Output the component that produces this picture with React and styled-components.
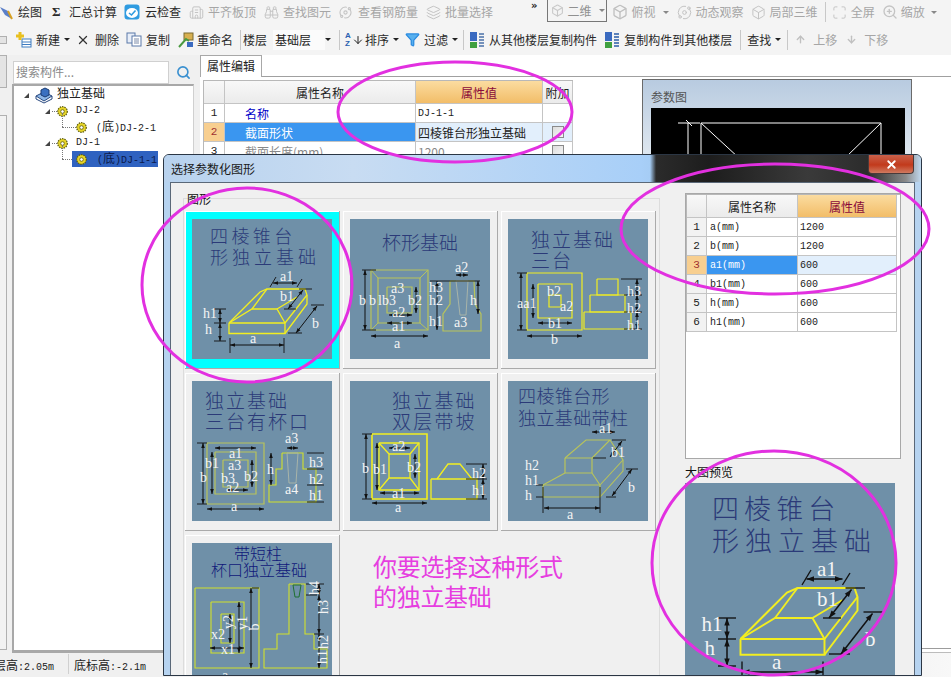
import React from "react";
import styled, { createGlobalStyle } from "styled-components";
import { Search, X, Filter, Binoculars, ArrowUp, ArrowDown, Maximize, ZoomIn, Box, Layers, Orbit, Building2 } from "lucide-react";

const GlobalStyle = createGlobalStyle`
  html, body { margin: 0; padding: 0; background: #fff; }
  body { font-family: "Noto Sans CJK SC", "Liberation Sans", sans-serif; font-size: 12px; color: #222; }
`;

const Page = styled.div`
  position: relative;
  width: 951px;
  height: 677px;
  overflow: hidden;
  background: #f0f0f0;
  display: flex;
  flex-direction: column;
`;

const Toolbar = styled.div`
  height: ${(p) => p.$h}px;
  flex: none;
  display: flex;
  align-items: center;
  background: #f4f4f4;
  white-space: nowrap;
  overflow: hidden;
`;

const Tool = styled.div`
  display: flex;
  align-items: center;
  flex: none;
  gap: ${(p) => p.$gap ?? 4}px;
  margin-left: ${(p) => p.$ml ?? 0}px;
  color: ${(p) => (p.$off ? "#a6a6a6" : "#2a2a2a")};
  height: 18px;
  line-height: 18px;
`;

const DropArrow = styled.span`
  width: 0;
  height: 0;
  flex: none;
  margin-left: ${(p) => p.$ml ?? 3}px;
  border-left: 3px solid transparent;
  border-right: 3px solid transparent;
  border-top: 3px solid ${(p) => (p.$off ? "#888" : "#222")};
`;

const Sep = styled.span`
  width: 1px;
  height: 20px;
  flex: none;
  background: #c8c8c8;
  margin-left: ${(p) => p.$ml}px;
`;

const ViewCombo = styled.div`
  flex: none;
  margin-left: ${(p) => p.$ml}px;
  width: 60px;
  height: 22px;
  box-sizing: border-box;
  border: 1px solid #777;
  border-top: 0;
  display: flex;
  align-items: center;
  gap: 4px;
  padding-left: 3px;
  color: #909090;
  align-self: flex-start;
`;

const FloorCombo = styled.div`
  flex: none;
  width: 50px;
  margin-left: 6px;
  padding-left: 2px;
  background: #fbfbfb;
  height: 20px;
  line-height: 20px;
`;

const Overflow = styled.span`
  flex: none;
  margin-left: 38px;
  align-self: flex-start;
  font: bold 10px/9px "DejaVu Sans", sans-serif;
  padding-top: 1px;
`;

const SigmaGlyph = styled.span`
  font: bold 13px "Liberation Serif", serif;
  width: 10px;
`;

const SortGlyph = styled.span`
  display: flex;
  flex-direction: column;
  width: 6px;
  font: bold 8px/8px "Liberation Sans", sans-serif;
  color: #2a60b0;
`;

const Workspace = styled.div`
  flex: 1;
  display: flex;
  min-height: 0;
`;

const LeftStrip = styled.div`
  width: 12px;
  flex: none;
  display: flex;
  flex-direction: column;
  gap: 27px;
`;

const StripTab = styled.div`
  flex: none;
  width: 7px;
  height: ${(p) => p.$h}px;
  background: ${(p) => p.$bg || "#e4e4e4"};
  border: 1px solid #b0b0b0;
  border-left: 0;
  box-sizing: border-box;
`;

const LeftPane = styled.div`
  width: 182px;
  flex: none;
  display: flex;
  flex-direction: column;
  padding-top: 5px;
`;

const SearchRow = styled.div`
  height: 24px;
  display: flex;
  align-items: center;
  flex: none;
`;

const SearchInput = styled.div`
  width: 156px;
  height: 23px;
  margin-left: 1px;
  background: #fff;
  border: 1px solid #d0d0d0;
  box-sizing: border-box;
  color: #8a8a8a;
  line-height: 19px;
  padding-left: 2px;
`;

const SearchIconWrap = styled.span`
  margin-left: 7px;
  display: flex;
  color: #3a90d0;
`;

const TreeBox = styled.div`
  flex: 1;
  background: #fff;
  border: 1px solid #a8a8a8;
  border-width: 2px 0 3px 2px;
  border-right: 1px solid #d0d0d0;
  padding-top: 1px;
`;

const TreeRow = styled.div`
  position: relative;
  height: 16px;
  display: flex;
  align-items: center;
  padding-left: ${(p) => p.$indent}px;
`;

const Expander = styled.span`
  width: 0;
  height: 0;
  flex: none;
  margin-right: ${(p) => p.$mr ?? 2}px;
  border-left: 5px solid transparent;
  border-bottom: 5px solid #444;
`;

const TreeDots = styled.span`
  flex: none;
  width: ${(p) => p.$w}px;
  border-top: 1px dotted #777;
`;

const TreeGuide = styled.span`
  position: absolute;
  left: ${(p) => p.$x}px;
  top: -6px;
  height: 14px;
  border-left: 1px dotted #777;
`;

const TreeLabel = styled.span`
  margin-left: ${(p) => p.$ml ?? 6}px;
  color: #222;
  font: ${(p) => (p.$cjk ? 12 : 10)}px/16px "Liberation Mono", "Noto Sans CJK SC", monospace;
`;

const SelectedNode = styled.span`
  display: flex;
  align-items: center;
  gap: 10px;
  width: 86px;
  height: 16px;
  padding-left: 4px;
  box-sizing: border-box;
  background: #2f62c0;
  color: #0c1a4a;
  font: 10px/16px "Liberation Mono", "Noto Sans CJK SC", monospace;
`;

const Cjk = styled.span`
  font: 12px "Noto Sans CJK SC", sans-serif;
`;

const Mono = styled.span`
  font: 10px "Liberation Mono", monospace;
`;

const MainPane = styled.div`
  flex: 1;
  margin-left: 6px;
  background: #fff;
  display: flex;
  flex-direction: column;
  min-width: 0;
`;

const TabStrip = styled.div`
  height: 22px;
  flex: none;
  box-sizing: border-box;
  border-bottom: 1px solid #a0a0a0;
`;

const Tab = styled.div`
  width: 62px;
  height: 22px;
  box-sizing: border-box;
  border: 1px solid #a8a8a8;
  border-bottom: 0;
  background: #fff;
  text-align: center;
  line-height: 20px;
`;

const MainBody = styled.div`
  display: flex;
  align-items: flex-start;
`;

const PropTable = styled.div`
  display: grid;
  grid-template-columns: ${(p) => p.$cols};
  grid-template-rows: ${(p) => p.$head}px;
  grid-auto-rows: 19px;
  margin: ${(p) => p.$margin};
  border-top: 1px solid #b8b8b8;
  border-left: 1px solid #b8b8b8;
  flex: none;
`;

const Cell = styled.div`
  box-sizing: border-box;
  border-right: 1px solid #c4c4c4;
  border-bottom: 1px solid #c4c4c4;
  background: ${(p) => p.$bg || "#fff"};
  color: ${(p) => p.$color || "#222"};
  padding-left: ${(p) => p.$pl ?? 2}px;
  display: flex;
  align-items: center;
  justify-content: ${(p) => (p.$center ? "center" : "flex-start")};
  overflow: hidden;
  white-space: nowrap;
`;

const IndexCell = styled(Cell)`
  font: 11px "Liberation Mono", monospace;
  padding-left: 0;
  justify-content: center;
`;

const HeadCell = styled(Cell)`
  background: linear-gradient(#f8f8f8, #ebebeb);
  justify-content: center;
  padding-left: 0;
`;

const ValueHead = styled(HeadCell)`
  background: linear-gradient(#fbdca0, #f2bd68);
  color: #8a0a3a;
`;

const CheckBox = styled.span`
  width: 12px;
  height: 12px;
  box-sizing: border-box;
  border: 1px solid #8a8a8a;
  background: linear-gradient(135deg, #ddd, #f6f6f6);
`;

const ParamPanel = styled.div`
  flex: none;
  width: 270px;
  height: 90px;
  margin: 2px 0 0 69px;
  box-sizing: border-box;
  border: 1px solid #6a6a6a;
  background: linear-gradient(#b8cbe0, #e6ecf2);
  padding: 0 7px 0 8px;
  color: #555;
`;

const ParamTitle = styled.div`
  height: 28px;
  line-height: 34px;
`;

const BlackView = styled.svg`
  display: block;
  width: 254px;
  height: 60px;
  background: #000;
`;

const PaneFooter = styled.div`
  margin-top: auto;
  height: 3px;
  border-top: 1px solid #9c9c9c;
  border-bottom: 1px solid #bcbcbc;
`;

const StatusBar = styled.div`
  height: 24px;
  flex: none;
  box-sizing: border-box;
  padding-bottom: 2px;
  display: flex;
  align-items: center;
  background: linear-gradient(90deg, #f0f0f0, #f0f0f0 90%, #f8f8f8);
`;

const StatusText = styled.span`
  flex: none;
  width: ${(p) => p.$w}px;
  margin-left: ${(p) => p.$ml}px;
`;

const StatusSep = styled.span`
  width: 1px;
  height: 20px;
  background: #d0d0d0;
`;

const Dialog = styled.div`
  position: absolute;
  left: 163px;
  top: 154px;
  width: 759px;
  height: 522px;
  box-sizing: border-box;
  border: 1px solid #2b3644;
  border-radius: 6px 6px 0 0;
  background: #b6d3f0;
  display: flex;
  flex-direction: column;
  overflow: hidden;
`;

const TitleBar = styled.div`
  position: relative;
  height: 27px;
  flex: none;
  padding-left: 7px;
  line-height: 28px;
  color: #1a1a1a;
  background: linear-gradient(90deg, #b8d2ee 0%, #c8dcf2 25%, #a8cff8 63%, #a6cdf5 64.2%, #2b2b2b 65%, #1d1d1d 72%, #3a3a3a 85%, #2c2c2c 93%, #8a8a8a 98%, #c0d8ee 100%);
`;

const CloseButton = styled.div`
  position: absolute;
  right: 7px;
  top: 0;
  width: 46px;
  height: 19px;
  box-sizing: border-box;
  border: 1px solid #4a3a3a;
  border-top: 0;
  border-radius: 0 0 4px 4px;
  background: linear-gradient(#c9604a, #c23a1c 55%, #d07a60);
  color: #fff;
  display: flex;
  align-items: center;
  justify-content: center;
`;

const DialogBody = styled.div`
  flex: 1;
  min-height: 0;
  margin: 0 6px;
  box-sizing: border-box;
  border: 1px solid #5a6878;
  border-bottom: 0;
  background: #f0f0f0;
  display: flex;
  overflow: hidden;
`;

const ShapeGroup = styled.div`
  flex: none;
  width: 477px;
  margin: 15px 0 0 12px;
  padding-left: 1px;
  box-sizing: border-box;
  border-top: 1px solid #dcdcdc;
  border-right: 1px solid #dcdcdc;
  border-left: 1px solid #dcdcdc;
`;

const GroupLabel = styled.div`
  height: 14px;
  line-height: 14px;
  margin: ${(p) => p.$margin};
  color: #111;
`;

const ShapeGrid = styled.div`
  display: grid;
  grid-template-columns: repeat(3, 155px);
  grid-auto-rows: 158px;
  gap: 4px 3px;
  margin-top: 5px;
`;

const ShapeCard = styled.div`
  box-sizing: border-box;
  padding: 8px 7px 0;
  background: ${(p) => (p.$selected ? "#00ffff" : "#f0f0f0")};
  border-right: 1px solid #aaa;
  border-bottom: 1px solid #aaa;
  box-shadow: inset 1px 1px 0 #fff;
`;

const Note = styled.div`
  grid-column: 2 / 4;
  padding: 16px 0 0 30px;
  font-size: 24px;
  line-height: 30px;
  letter-spacing: -0.3px;
  color: #e63ee0;
`;

const SidePanel = styled.div`
  flex: none;
  width: 235px;
  margin-left: 18px;
`;

const PropBox = styled.div`
  width: 216px;
  height: 266px;
  margin: 10px 0 0 7px;
  box-sizing: border-box;
  background: #fff;
  border: 1px solid #a8a8a8;
  overflow: hidden;
`;

const PreviewGroup = styled.div`
  margin-top: 6px;
`;

const FigSvg = styled.svg`
  display: block;
  width: ${(p) => p.$size}px;
  height: ${(p) => p.$size}px;
  background: #6f90a8;
  margin-left: ${(p) => p.$ml ?? 0}px;
  margin-top: ${(p) => p.$mt ?? 0}px;
`;

const FigTitle = styled.text`
  font-family: "Noto Sans CJK SC", sans-serif;
  font-size: ${(p) => p.$size}px;
  letter-spacing: ${(p) => p.$spacing}px;
  fill: ${(p) => p.$color};
  font-weight: 300;
`;

const FigLabel = styled.text`
  font-family: "Liberation Serif", serif;
  font-size: 14px;
  fill: #f4f4f4;
  dominant-baseline: central;
`;

const Ellipses = styled.svg`
  position: absolute;
  left: 0;
  top: 0;
  pointer-events: none;
`;

const YELLOW = "#f2ee20";
const OLIVE = "#b9c45a";
const LIME = "#d2e02a";

const rect = (x1, y1, x2, y2) => `${x1},${y1} ${x2},${y1} ${x2},${y2} ${x1},${y2} ${x1},${y1}`;

const frustum = {
  titles: [
    { t: "四棱锥台", x: 18, y: 24, size: 18, spacing: 3.4 },
    { t: "形独立基础", x: 18, y: 45, size: 18, spacing: 4 },
  ],
  shapes: [
    [rect(37, 104, 93, 114.5), YELLOW, 1.3],
    ["37,104 60,90 85,90 93,104", YELLOW, 1.3],
    ["37,104 68,73 75,70 113,70 115,76 115,85 93,114.5", YELLOW, 1.3],
    ["60,90 75,70", YELLOW, 1.3],
    ["85,90 105,78", YELLOW, 1.3],
    ["93,104 115,76", YELLOW, 1.3],
  ],
  ticks: [
    [38, 119, 38, 134], [92, 119, 92, 134], [78, 68, 84, 58], [105, 68, 110, 60],
    [107, 70, 120, 70], [92, 90, 104, 90], [96, 114, 110, 114], [119, 86, 132, 86],
    [22, 90, 34, 90], [22, 104, 34, 104], [22, 122, 34, 122],
  ],
  dims: [[38, 126, 92, 126], [81, 64, 105, 64], [96, 90, 111, 71], [104, 114, 125, 87], [28, 90, 28, 104], [28, 104, 28, 122]],
  labels: [["a", 58, 119], ["a1", 88, 57], ["b1", 88, 77], ["b", 120, 104], ["h1", 11, 94], ["h", 13, 110]],
};

const cup = {
  titles: [{ t: "杯形基础", x: 32, y: 31, size: 19, spacing: 0 }],
  shapes: [
    [rect(21, 51, 78, 111), OLIVE, 1.2], [rect(28, 59, 70, 104), OLIVE, 1.2], [rect(37, 68, 62, 94), OLIVE, 1.2],
    ["21,51 28,59", OLIVE, 1], ["78,51 70,59", OLIVE, 1], ["21,111 28,104", OLIVE, 1], ["78,111 70,104", OLIVE, 1],
    ["100,62 124,62 125,85 131,95 131,112 93,112 93,95 100,85 100,62", OLIVE, 1.2],
    ["106,62 118,62 116,96 110,96 106,62", "#a8b4a8", 1],
  ],
  ticks: [[12, 51, 26, 51], [12, 111, 26, 111], [80, 62, 130, 62]],
  dims: [[15, 51, 15, 111], [21, 117, 78, 117], [37, 104, 62, 104], [39, 96, 62, 96], [106, 56, 118, 56], [66, 68, 66, 94], [128, 62, 128, 95], [87, 62, 87, 111]],
  labels: [["a", 44, 124], ["a1", 42, 107], ["a2", 42, 93], ["a3", 41, 69], ["b", 9, 81], ["b", 19, 81], ["lb3", 28, 81], ["b2", 58, 81], ["a2", 105, 48], ["h3", 79, 68], ["h2", 79, 81], ["h1", 79, 102], ["h", 120, 81], ["a3", 104, 103]],
};

const threeStep = {
  titles: [
    { t: "独立基础", x: 23, y: 28, size: 19, spacing: 2 },
    { t: "三台", x: 23, y: 49, size: 19, spacing: 2 },
  ],
  shapes: [
    [rect(19, 54, 74, 111), YELLOW, 1.2], [rect(30, 65, 64, 99), YELLOW, 1.2], [rect(41, 76, 53, 88), YELLOW, 1.2],
    [rect(76, 93, 123, 110), YELLOW, 1.2], [rect(82, 76, 117, 93), YELLOW, 1.2], [rect(89, 60, 110, 76), YELLOW, 1.2],
  ],
  ticks: [[9, 54, 19, 54], [9, 111, 19, 111], [113, 60, 134, 60], [116, 76, 134, 76], [116, 93, 134, 93], [116, 110, 134, 110]],
  dims: [[13, 54, 13, 111], [25, 65, 25, 99], [30, 104, 64, 104], [19, 117, 74, 117], [129, 60, 129, 76], [129, 76, 129, 93], [129, 93, 129, 110]],
  labels: [["aa1", 9, 84], ["b2", 39, 72], ["a2", 52, 87], ["b1", 40, 104], ["b", 43, 120], ["h3", 119, 72], ["h2", 119, 89], ["h1", 119, 106]],
};

const threeCup = {
  titles: [
    { t: "独立基础", x: 13, y: 27, size: 19, spacing: 2 },
    { t: "三台有杯口", x: 13, y: 48, size: 19, spacing: 2 },
  ],
  shapes: [
    [rect(15, 62, 72, 123), OLIVE, 1.2], [rect(23, 71, 64, 113), OLIVE, 1.2], [rect(31, 79, 56, 106), OLIVE, 1.2],
    ["90,72 111,72 111,88 124,88 124,121 77,121 77,104 84,104 84,88 90,88 90,72", LIME, 1.1],
    ["95,72 106,72 104,102 97,102 95,72", "#a8b4a8", 1],
  ],
  ticks: [[5, 62, 15, 62], [5, 123, 15, 123], [115, 72, 132, 72], [115, 88, 132, 88], [115, 104, 132, 104], [115, 121, 132, 121]],
  dims: [[11, 62, 11, 123], [15, 128, 72, 128], [23, 67, 64, 67], [20, 71, 20, 113], [35, 109, 56, 109], [60, 79, 60, 106], [95, 67, 106, 67], [79, 72, 79, 104]],
  labels: [["a", 39, 125], ["a1", 37, 72], ["b1", 13, 82], ["a3", 36, 84], ["b", 8, 96], ["b3", 29, 97], ["b2", 52, 95], ["a2", 34, 106], ["a3", 93, 57], ["h", 75, 88], ["a4", 93, 108], ["h3", 117, 81], ["h2", 117, 98], ["h1", 117, 114]],
};

const doubleSlope = {
  titles: [
    { t: "独立基础", x: 42, y: 27, size: 19, spacing: 2.2 },
    { t: "双层带坡", x: 42, y: 48, size: 19, spacing: 2.2 },
  ],
  shapes: [
    [rect(22, 53, 77, 118), YELLOW, 1.6], [rect(29, 62, 69, 109), YELLOW, 1.3], [rect(39, 73, 60, 97), YELLOW, 1.3],
    ["29,62 39,73", YELLOW, 1.3], ["69,62 60,73", YELLOW, 1.3], ["29,109 39,97", YELLOW, 1.3], ["69,109 60,97", YELLOW, 1.3],
    [rect(81, 98, 127, 118), YELLOW, 1.3], ["87,98 98,83 110,83 122,98", YELLOW, 1.3],
  ],
  ticks: [[12, 53, 22, 53], [12, 118, 22, 118], [116, 83, 137, 83], [116, 98, 137, 98], [116, 118, 137, 118]],
  dims: [[16, 53, 16, 118], [27, 62, 27, 109], [39, 67, 60, 67], [65, 73, 65, 97], [30, 112, 69, 112], [22, 122, 77, 122], [133, 83, 133, 98], [133, 98, 133, 118]],
  labels: [["b", 12, 87], ["b1", 23, 88], ["a2", 42, 65], ["b2", 57, 86], ["a1", 42, 112], ["a", 45, 126], ["h2", 122, 92], ["h1", 122, 109]],
};

const withColumn = {
  titles: [
    { t: "四棱锥台形", x: 10, y: 22, size: 18, spacing: 0.4 },
    { t: "独立基础带柱", x: 10, y: 44, size: 18, spacing: 0.4 },
  ],
  shapes: [
    [rect(35, 104, 92, 116), OLIVE, 1.2], [rect(57, 77, 84, 92), OLIVE, 1.2],
    ["35,104 57,92", OLIVE, 1.1], ["92,104 84,92", OLIVE, 1.1],
    ["57,77 78,59 102,59 84,77", OLIVE, 1.1], ["102,59 115,79 115,90 92,116", OLIVE, 1.1], ["92,104 115,79", OLIVE, 1.1],
  ],
  ticks: [[35, 106, 35, 132], [92, 106, 92, 132], [104, 59, 118, 59], [85, 77, 98, 77], [98, 116, 108, 116], [118, 88, 130, 88], [28, 104, 35, 104], [28, 116, 35, 116]],
  dims: [[36, 127, 92, 127], [84, 51, 107, 51], [102, 76, 114, 60], [104, 115, 124, 88]],
  labels: [["h2", 17, 84], ["h1", 17, 99], ["h", 17, 114], ["a", 59, 133], ["a1", 91, 47], ["b1", 103, 71], ["b", 120, 106]],
};

const shortColumn = {
  titles: [
    { t: "带短柱", x: 42, y: 17, size: 16, spacing: 0, color: "#10187a" },
    { t: "杯口独立基础", x: 19, y: 33, size: 16, spacing: 0, color: "#10187a" },
  ],
  shapes: [
    [rect(3, 45, 67, 125), LIME, 1.1], [rect(19, 59, 52, 110), LIME, 1.1], [rect(29, 71, 42, 100), LIME, 1.1],
    ["97,41 113,41 113,91 122,91 122,106 135,106 135,125 72,125 72,106 85,106 85,91 97,91 97,41", LIME, 1.1],
    ["101,42 109,42 107,54 103,54 101,42", "#1f7030", 1],
  ],
  ticks: [[60, 45, 67, 45], [114, 41, 132, 41], [114, 52, 125, 52], [122, 91, 132, 91]],
  dims: [[59, 45, 59, 125], [47, 59, 47, 110], [38, 71, 38, 100], [18, 105, 52, 105], [127, 41, 127, 52], [127, 52, 127, 91], [127, 91, 127, 125]],
  labels: [["x2", 19, 91], ["x1", 29, 106], ["a", 30, 132], ["b", 62, 84, 90], ["y1", 50, 80, 90], ["y2", 36, 79, 90], ["h4", 122, 45, 90], ["h3", 131, 64, 90], ["h2", 131, 99, 90], ["h1", 130, 114, 90]],
};

const cards = [frustum, cup, threeStep, threeCup, doubleSlope, withColumn, shortColumn];

function Dim({ x1, y1, x2, y2 }) {
  const a = Math.atan2(y2 - y1, x2 - x1);
  const head = (x, y, d) => {
    const bx = x + d * 5 * Math.cos(a);
    const by = y + d * 5 * Math.sin(a);
    const nx = -Math.sin(a) * 1.8;
    const ny = Math.cos(a) * 1.8;
    return `${x},${y} ${bx + nx},${by + ny} ${bx - nx},${by - ny}`;
  };
  return (
    <g>
      <line x1={x1} y1={y1} x2={x2} y2={y2} stroke="#111" strokeWidth="1" />
      <polygon points={head(x1, y1, 1)} fill="#111" />
      <polygon points={head(x2, y2, -1)} fill="#111" />
    </g>
  );
}

function Figure({ data, size = 140, ml, mt }) {
  return (
    <FigSvg viewBox="0 0 140 140" $size={size} $ml={ml} $mt={mt}>
      {data.titles.map((t) => (
        <FigTitle key={t.t} x={t.x} y={t.y} $size={t.size} $spacing={t.spacing} $color={t.color || "#2b3a78"}>
          {t.t}
        </FigTitle>
      ))}
      {data.shapes.map(([pts, c, w], i) => (
        <polyline key={i} points={pts} fill="none" stroke={c} strokeWidth={w} />
      ))}
      {data.ticks.map(([x1, y1, x2, y2], i) => (
        <line key={i} x1={x1} y1={y1} x2={x2} y2={y2} stroke="#111" strokeWidth="0.9" />
      ))}
      {data.dims.map(([x1, y1, x2, y2], i) => (
        <Dim key={i} x1={x1} y1={y1} x2={x2} y2={y2} />
      ))}
      {data.labels.map(([t, x, y, rot], i) => (
        <FigLabel key={i} x={x} y={y} transform={rot ? `rotate(-${rot} ${x} ${y})` : undefined} textAnchor={rot ? "middle" : "start"}>
          {t}
        </FigLabel>
      ))}
    </FigSvg>
  );
}

function PenIcon() {
  return (
    <svg width="14" height="16" viewBox="0 0 14 16">
      <path d="M0 3 L8 7 L12 15 L5 11 Z" fill="#5b7fc8" />
      <path d="M8 7 L12 15" stroke="#d8a020" strokeWidth="2" />
    </svg>
  );
}

function CloudCheckIcon() {
  return (
    <svg width="16" height="16" viewBox="0 0 16 16">
      <rect x="0.5" y="0.5" width="15" height="15" rx="3" fill="#2f9be0" />
      <ellipse cx="8" cy="9" rx="6" ry="5" fill="#fff" />
      <path d="M5 9 L7.5 11 L11.5 6.5" fill="none" stroke="#2f9be0" strokeWidth="1.6" />
    </svg>
  );
}

function NewIcon() {
  return (
    <svg width="16" height="16" viewBox="0 0 16 16">
      <rect x="6" y="7" width="9" height="8" fill="#fff" stroke="#3f7cc0" />
      <path d="M6 10 H15 M6 12.5 H15" stroke="#3f7cc0" />
      <path d="M4 0 V8 M0 4 H8" stroke="#e8c020" strokeWidth="3" />
    </svg>
  );
}

function CopyIcon() {
  return (
    <svg width="16" height="15" viewBox="0 0 16 15">
      <rect x="1" y="1" width="8" height="10" fill="#e8eef8" stroke="#5a78a8" />
      <rect x="6" y="4" width="9" height="10" fill="#fff" stroke="#5a78a8" />
      <path d="M8 7 H13 M8 9 H13 M8 11 H13" stroke="#7a8aa8" />
    </svg>
  );
}

function RenameIcon() {
  return (
    <svg width="16" height="16" viewBox="0 0 16 16">
      <rect x="6" y="1" width="9" height="7" fill="#d8b050" stroke="#7a6a30" />
      <path d="M1 15 L8 7 L11 9" fill="none" stroke="#4a9a40" strokeWidth="2" />
      <rect x="9" y="10" width="6" height="5" fill="#3a6ac0" />
    </svg>
  );
}

function FloorCopyIcon({ back }) {
  return (
    <svg width="16" height="18" viewBox="0 0 16 18">
      <rect x="1" y="1" width="7" height="9" fill="#3a6ac0" />
      <path d="M1 11 H8 V17 H1 Z" fill="#40a040" />
      <path d="M10 3 H15 M10 6 H15 M10 9 H15 M10 12 H15 M10 15 H15" stroke={back ? "#2a5ca8" : "#4a70a8"} strokeWidth="1.5" />
    </svg>
  );
}

function GearDot() {
  return (
    <svg width="11" height="11" viewBox="0 0 11 11">
      <circle cx="5.5" cy="5.5" r="4.8" fill="#e6d428" stroke="#5a5a10" strokeWidth="1.2" strokeDasharray="1.4 1" />
      <circle cx="5.5" cy="5.5" r="1.8" fill="#fff" stroke="#5a5a10" strokeWidth="0.8" />
    </svg>
  );
}

function RootIcon() {
  return (
    <svg width="18" height="17" viewBox="0 0 18 17">
      <path d="M1 9 L9 5 L17 9 L9 14 Z" fill="#8eb8e8" stroke="#2a4a80" />
      <path d="M1 9 V12 L9 16 L17 12 V9" fill="none" stroke="#2a4a80" />
      <path d="M6 3 L10 1 L14 3 V8 L10 10 L6 8 Z" fill="#3a70c0" stroke="#1a3a70" />
    </svg>
  );
}

const offIcon = { size: 15, color: "#c4c4c4", strokeWidth: 1.6 };

function TopToolbar() {
  return (
    <Toolbar $h={24}>
      <Tool><PenIcon /><span>绘图</span></Tool>
      <Tool $ml={10} $gap={7}><SigmaGlyph>Σ</SigmaGlyph><span>汇总计算</span></Tool>
      <Tool $ml={7} $gap={5}><CloudCheckIcon /><span>云检查</span></Tool>
      <Tool $ml={8} $off><Building2 {...offIcon} /><span>平齐板顶</span></Tool>
      <Tool $ml={8} $off><Binoculars {...offIcon} /><span>查找图元</span></Tool>
      <Tool $ml={8} $off $gap={6}><Orbit size={13} color="#c4c4c4" /><span>查看钢筋量</span></Tool>
      <Tool $ml={8} $off><Layers {...offIcon} /><span>批量选择</span></Tool>
      <Overflow>»</Overflow>
      <ViewCombo $ml={9}>
        <Box size={13} color="#c8c8c8" />
        <span>二维</span>
        <DropArrow $off />
      </ViewCombo>
      <Tool $ml={5} $off><Box size={16} color="#c0c0c0" /><span>俯视</span><DropArrow $off /></Tool>
      <Tool $ml={8} $off><Orbit {...offIcon} /><span>动态观察</span></Tool>
      <Tool $ml={7} $off><Box {...offIcon} /><span>局部三维</span></Tool>
      <Sep $ml={7} />
      <Tool $ml={6} $off><Maximize {...offIcon} /><span>全屏</span></Tool>
      <Tool $ml={7} $off $gap={3}><ZoomIn size={16} color="#c4c4c4" /><span>缩放</span><DropArrow $off /></Tool>
    </Toolbar>
  );
}

function SecondToolbar() {
  return (
    <Toolbar $h={31}>
      <StripTab $h={8} />
      <Tool $ml={9}><NewIcon /><span>新建</span><DropArrow $ml={0} /></Tool>
      <Tool $ml={6} $gap={5}><X size={14} color="#333" strokeWidth={2.2} /><span>删除</span></Tool>
      <Tool $ml={7}><CopyIcon /><span>复制</span></Tool>
      <Tool $ml={8} $gap={3}><RenameIcon /><span>重命名</span></Tool>
      <Sep $ml={7} />
      <Tool $ml={2}><span>楼层</span></Tool>
      <FloorCombo>基础层</FloorCombo>
      <DropArrow $ml={0} />
      <Sep $ml={8} />
      <Tool $ml={5} $gap={1}>
        <SortGlyph><span>A</span><span>Z</span></SortGlyph>
        <ArrowDown size={12} color="#222" />
        <span>排序</span>
        <DropArrow />
      </Tool>
      <Tool $ml={6}><Filter size={15} color="#2a8ae0" fill="#58b0ee" /><span>过滤</span><DropArrow $ml={0} /></Tool>
      <Sep $ml={5} />
      <Tool $ml={5}><FloorCopyIcon /><span>从其他楼层复制构件</span></Tool>
      <Tool $ml={7}><FloorCopyIcon back /><span>复制构件到其他楼层</span></Tool>
      <Sep $ml={8} />
      <Tool $ml={6}><span>查找</span><DropArrow $ml={0} /></Tool>
      <Sep $ml={6} />
      <Tool $ml={7} $off $gap={7}><ArrowUp size={11} color="#c0c0c0" strokeWidth={3} /><span>上移</span></Tool>
      <Tool $ml={9} $off $gap={7}><ArrowDown size={11} color="#c0c0c0" strokeWidth={3} /><span>下移</span></Tool>
    </Toolbar>
  );
}

function Tree() {
  return (
    <TreeBox>
      <TreeRow $indent={10}>
        <Expander $mr={6} />
        <RootIcon />
        <TreeLabel $ml={4} $cjk>独立基础</TreeLabel>
      </TreeRow>
      <TreeRow $indent={31}>
        <Expander />
        <TreeDots $w={5} />
        <GearDot />
        <TreeLabel $ml={8}>DJ-2</TreeLabel>
      </TreeRow>
      <TreeRow $indent={48}>
        <TreeGuide $x={48} />
        <TreeDots $w={14} />
        <GearDot />
        <TreeLabel $ml={9}>(<Cjk>底</Cjk>)DJ-2-1</TreeLabel>
      </TreeRow>
      <TreeRow $indent={31}>
        <Expander />
        <TreeDots $w={5} />
        <GearDot />
        <TreeLabel $ml={8}>DJ-1</TreeLabel>
      </TreeRow>
      <TreeRow $indent={48}>
        <TreeGuide $x={48} />
        <TreeDots $w={10} />
        <SelectedNode>
          <GearDot />
          <span>(<Cjk>底</Cjk>)DJ-1-1</span>
        </SelectedNode>
      </TreeRow>
    </TreeBox>
  );
}

function BackProperties() {
  return (
    <PropTable $cols="21px 191px 127px 30px" $head={23} $margin="3px 0 0 3px">
      <HeadCell />
      <HeadCell>属性名称</HeadCell>
      <ValueHead>属性值</ValueHead>
      <HeadCell>附加</HeadCell>

      <IndexCell>1</IndexCell>
      <Cell $pl={20} $color="#0000c8">名称</Cell>
      <Cell><Mono>DJ-1-1</Mono></Cell>
      <Cell />

      <IndexCell $bg="#f8cf90" $color="#a03030">2</IndexCell>
      <Cell $pl={20} $bg="#3a96f0" $color="#fff">截面形状</Cell>
      <Cell $bg="#e2effc">四棱锥台形独立基础</Cell>
      <Cell $center $pl={0} $bg="#e2effc"><CheckBox /></Cell>

      <IndexCell>3</IndexCell>
      <Cell $pl={20} $color="#888">截面长度(mm)</Cell>
      <Cell $color="#888">1200</Cell>
      <Cell $center $pl={0}><CheckBox /></Cell>
    </PropTable>
  );
}

const params = [
  ["a(mm)", "1200"],
  ["b(mm)", "1200"],
  ["a1(mm)", "600"],
  ["b1(mm)", "600"],
  ["h(mm)", "600"],
  ["h1(mm)", "600"],
];

function ParamTable() {
  return (
    <PropTable $cols="20px 91px 99px" $head={23} $margin="0">
      <HeadCell />
      <HeadCell>属性名称</HeadCell>
      <ValueHead>属性值</ValueHead>
      {params.map(([name, value], i) => {
        const on = i === 2;
        return (
          <React.Fragment key={name}>
            <IndexCell $bg={on ? "#f8cf90" : "#f2f2f2"} $color={on ? "#a03030" : "#222"}>{i + 1}</IndexCell>
            <Cell $pl={3} $bg={on ? "#3a96f0" : "#fff"} $color={on ? "#fff" : "#222"}><Mono>{name}</Mono></Cell>
            <Cell $pl={2} $bg={on ? "#e2effc" : "#fff"}><Mono>{value}</Mono></Cell>
          </React.Fragment>
        );
      })}
    </PropTable>
  );
}

export default function App() {
  return (
    <>
      <GlobalStyle />
      <Page>
        <TopToolbar />
        <SecondToolbar />
        <Workspace>
          <LeftStrip>
            <StripTab $h={33} />
            <StripTab $h={535} $bg="#f2f2f2" />
          </LeftStrip>
          <LeftPane>
            <SearchRow>
              <SearchInput>搜索构件...</SearchInput>
              <SearchIconWrap><Search size={15} strokeWidth={2.6} /></SearchIconWrap>
            </SearchRow>
            <Tree />
          </LeftPane>
          <MainPane>
            <TabStrip><Tab>属性编辑</Tab></TabStrip>
            <MainBody>
              <BackProperties />
              <ParamPanel>
                <ParamTitle>参数图</ParamTitle>
                <BlackView viewBox="0 0 254 60">
                  <path d="M27 15 H49 M37 15 V60 M35 12 L41 18 M50 15 H230 M50 15 V60 M230 15 V60 M50 15 L88 50 M230 15 L194 50" stroke="#fff" strokeWidth="1" fill="none" />
                </BlackView>
              </ParamPanel>
            </MainBody>
            <PaneFooter />
          </MainPane>
        </Workspace>
        <StatusBar>
          <StatusText $w={74} $ml={-6}><Cjk>层高</Cjk><Mono>:2.05m</Mono></StatusText>
          <StatusSep />
          <StatusText $w={90} $ml={5}><Cjk>底标高</Cjk><Mono>:-2.1m</Mono></StatusText>
        </StatusBar>

        <Dialog>
          <TitleBar>
            选择参数化图形
            <CloseButton><X size={13} strokeWidth={3.4} /></CloseButton>
          </TitleBar>
          <DialogBody>
            <ShapeGroup>
              <GroupLabel $margin="-7px 0 0 2px">图形</GroupLabel>
              <ShapeGrid>
                {cards.map((c, i) => (
                  <ShapeCard key={i} $selected={i === 0}>
                    <Figure data={c} />
                  </ShapeCard>
                ))}
                <Note>你要选择这种形式<br />的独立基础</Note>
              </ShapeGrid>
            </ShapeGroup>
            <SidePanel>
              <PropBox><ParamTable /></PropBox>
              <PreviewGroup>
                <GroupLabel $margin="0 0 0 7px">大图预览</GroupLabel>
                <Figure data={frustum} size={210} ml={7} mt={4} />
              </PreviewGroup>
            </SidePanel>
          </DialogBody>
        </Dialog>

        <Ellipses width="951" height="677">
          <ellipse cx="455" cy="112" rx="117" ry="50" fill="none" stroke="#e230e0" strokeWidth="3" />
          <ellipse cx="775" cy="229" rx="154" ry="65" fill="none" stroke="#e230e0" strokeWidth="3" />
          <ellipse cx="247" cy="285" rx="105" ry="97" fill="none" stroke="#e230e0" strokeWidth="3" />
          <ellipse cx="774" cy="563" rx="122" ry="112" fill="none" stroke="#e230e0" strokeWidth="3" />
        </Ellipses>
      </Page>
    </>
  );
}
